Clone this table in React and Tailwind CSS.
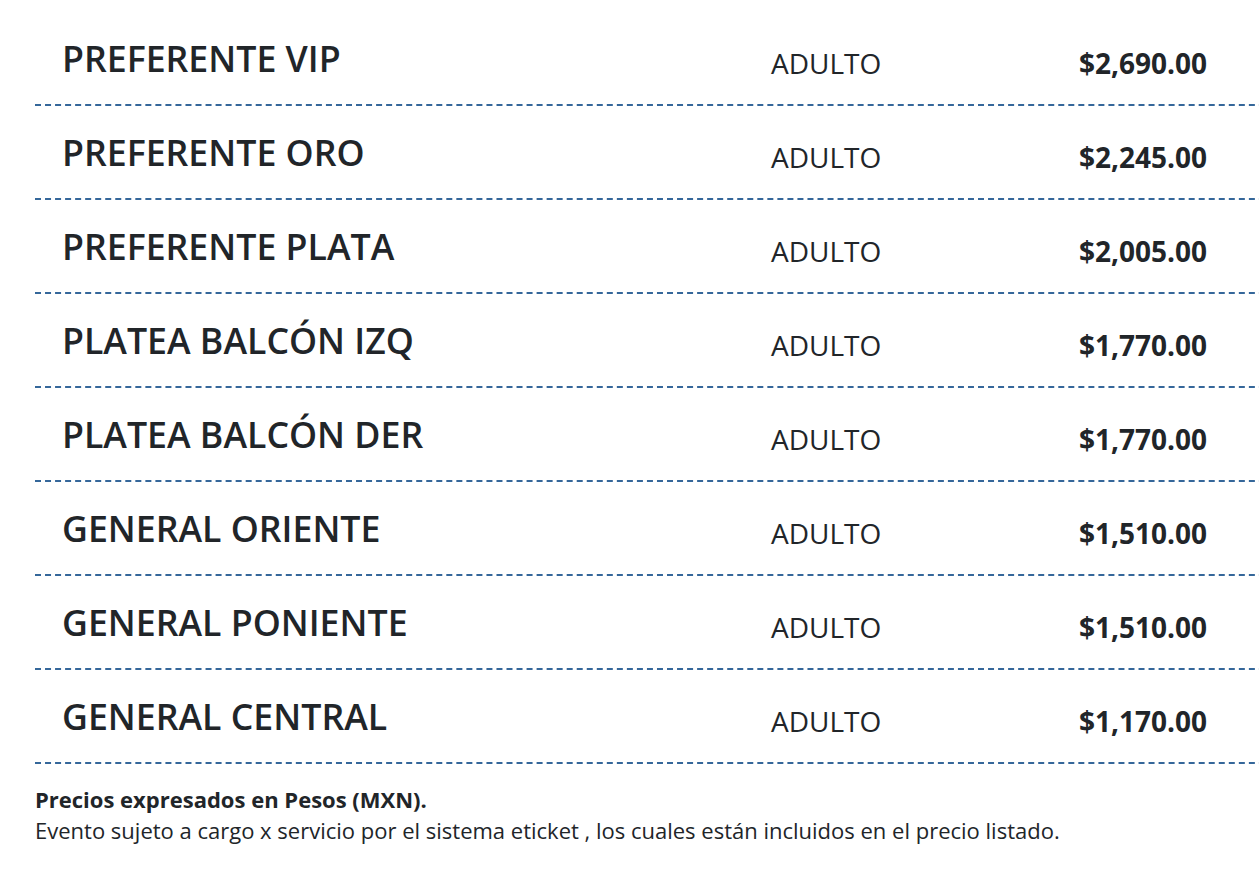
import React from "react";

const rows = [
  ["PREFERENTE VIP", "$2,690.00"],
  ["PREFERENTE ORO", "$2,245.00"],
  ["PREFERENTE PLATA", "$2,005.00"],
  ["PLATEA BALCÓN IZQ", "$1,770.00"],
  ["PLATEA BALCÓN DER", "$1,770.00"],
  ["GENERAL ORIENTE", "$1,510.00"],
  ["GENERAL PONIENTE", "$1,510.00"],
  ["GENERAL CENTRAL", "$1,170.00"],
];

export default function App() {
  return (
    <div
      className="w-[1259px] h-[883px] overflow-hidden bg-white text-[#212529] pl-[35px] pt-[12px]"
      style={{ fontFamily: '"Open Sans", "Noto Sans", sans-serif' }}
    >
      <div className="w-[1260px]">
        {rows.map(([name, price], i) => (
          <div
            key={i}
            className="flex h-[94px] border-b-2 border-dashed border-[#35679a]"
          >
            <div className="w-[736px] pl-[27px] pt-[26px] text-[35.7px] leading-[40px] font-semibold">
              {name}
            </div>
            <div className="w-[199px] pt-[35px] text-[28px] leading-[32px]">
              ADULTO
            </div>
            <div className="w-[237px] pt-[35px] text-right text-[28px] leading-[32px] font-bold">
              {price}
            </div>
          </div>
        ))}
      </div>
      <div className="pt-[20px] text-[22px] leading-[31px]">
        <div className="font-bold">Precios expresados en Pesos (MXN).</div>
        <div>
          Evento sujeto a cargo x servicio por el sistema eticket , los cuales
          están incluidos en el precio listado.
        </div>
      </div>
    </div>
  );
}
